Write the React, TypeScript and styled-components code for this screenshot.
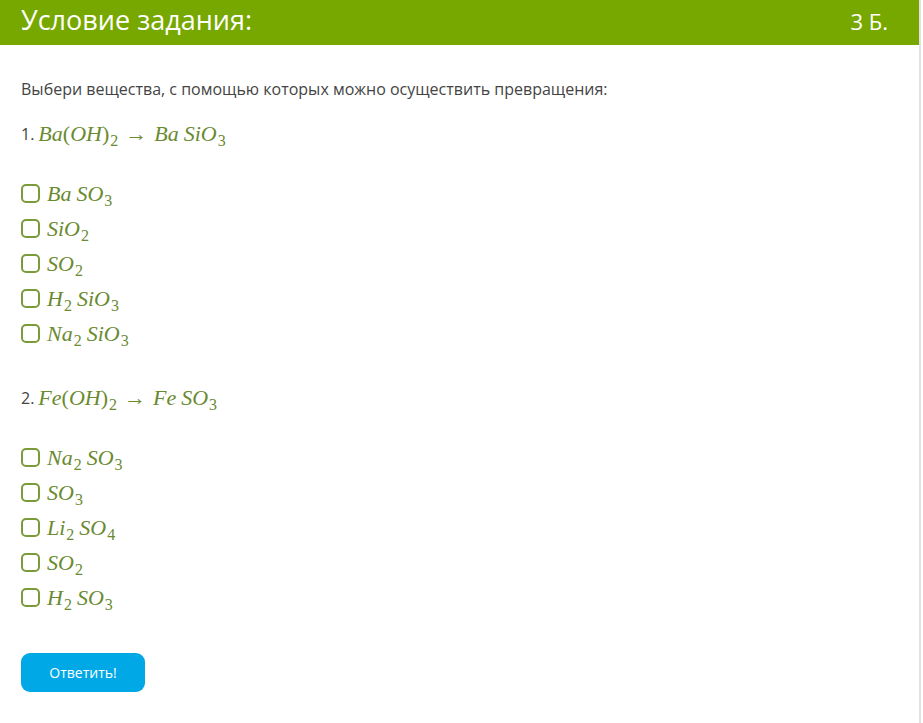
import styled, { createGlobalStyle } from "styled-components"
import { Fragment, useState } from "react"

const GlobalStyle = createGlobalStyle`
    html, body {
        margin: 0;
        padding: 0;
        background: #fff;
    }
    body {
        font-family: "Open Sans", "Noto Sans", sans-serif;
    }
`

const mathGreen = "#6a8a2f"
const boxGreen = "#7b9b3b"

const Panel = styled.div`
    width: 919px;
    min-height: 723px;
    border-right: 2px solid #e2e2e2;
    background: #fff;
`

const Header = styled.div`
    height: 45px;
    background: #76a800;
    display: flex;
    align-items: center;
    justify-content: space-between;
    padding: 0 31px 0 21px;
    color: #fff;
`

const Title = styled.span`
    font-size: 27px;
    line-height: 1;
    margin-top: -6px;
`

const Points = styled.span`
    font-size: 22px;
    line-height: 1;
    margin-top: -4px;
`

const Body = styled.div`
    padding: 34px 21px 0 21px;
`

const Prompt = styled.p`
    margin: 0 0 20px;
    font-size: 16px;
    line-height: 20px;
    color: #444;
`

const Question = styled.div<{ $top: number }>`
    margin-top: ${p => p.$top}px;
    display: flex;
    align-items: center;
    height: 30px;
    font-size: 16px;
    color: #444;
`

const Num = styled.span`
    margin-right: 4px;
`

const Options = styled.div`
    margin-top: 27px;
    display: flex;
    flex-direction: column;
`

const Option = styled.label`
    display: flex;
    align-items: center;
    height: 35px;
    cursor: pointer;
`

const Box = styled.span<{ $checked: boolean }>`
    width: 15px;
    height: 15px;
    border: 2px solid ${boxGreen};
    border-radius: 5px;
    margin-right: 7px;
    flex-shrink: 0;
    background: ${p => (p.$checked ? boxGreen : "transparent")};
`

const Math = styled.span`
    font-family: "Liberation Serif", "DejaVu Serif", serif;
    font-size: 22px;
    color: ${mathGreen};
    white-space: nowrap;
    line-height: 1;
`

const It = styled.i`
    font-style: italic;
`

const Up = styled.span`
    font-style: normal;
`

const Sub = styled.span`
    font-style: normal;
    font-size: 16px;
    position: relative;
    top: 5px;
    margin-left: 1px;
`

const Thin = styled.span`
    display: inline-block;
    width: 5px;
`

const Arrow = styled.span`
    font-style: normal;
    margin: 0 7px;
`

const SubmitBtn = styled.button`
    margin-top: 38px;
    width: 124px;
    height: 39px;
    border: none;
    border-radius: 9px;
    background: #00a8e6;
    color: #fff;
    font-family: "Open Sans", "Noto Sans", sans-serif;
    font-size: 14px;
    cursor: pointer;
`

// formula part: [text, subscript?]
type Part = [string, string?]

const Formula = ({ parts }: { parts: Part[] }) => (
    <Math>
        {parts.map(([txt, sub], i) => (
            <Fragment key={i}>
                {i > 0 && <Thin />}
                <It>{txt}</It>
                {sub && <Sub>{sub}</Sub>}
            </Fragment>
        ))}
    </Math>
)

const tasks: { num: string; from: string; to: Part[]; options: Part[][] }[] = [
    {
        num: "1.",
        from: "Ba",
        to: [["Ba"], ["SiO", "3"]],
        options: [
            [["Ba"], ["SO", "3"]],
            [["SiO", "2"]],
            [["SO", "2"]],
            [["H", "2"], ["SiO", "3"]],
            [["Na", "2"], ["SiO", "3"]],
        ],
    },
    {
        num: "2.",
        from: "Fe",
        to: [["Fe"], ["SO", "3"]],
        options: [
            [["Na", "2"], ["SO", "3"]],
            [["SO", "3"]],
            [["Li", "2"], ["SO", "4"]],
            [["SO", "2"]],
            [["H", "2"], ["SO", "3"]],
        ],
    },
]

export default function App() {
    const [checked, setChecked] = useState<Record<string, boolean>>({})

    const toggle = (key: string) => {
        setChecked(prev => ({ ...prev, [key]: !prev[key] }))
    }

    return (
        <Panel>
            <GlobalStyle />
            <Header>
                <Title>Условие задания:</Title>
                <Points>3 Б.</Points>
            </Header>
            <Body>
                <Prompt>Выбери вещества, с помощью которых можно осуществить превращения:</Prompt>
                {tasks.map((t, ti) => (
                    <div key={t.num}>
                        <Question $top={ti === 0 ? 0 : 32}>
                            <Num>{t.num}</Num>
                            <Math>
                                <It>{t.from}</It>
                                <Up>(</Up>
                                <It>OH</It>
                                <Up>)</Up>
                                <Sub>2</Sub>
                                <Arrow>→</Arrow>
                            </Math>
                            <Formula parts={t.to} />
                        </Question>
                        <Options>
                            {t.options.map((o, oi) => {
                                const key = `${ti}-${oi}`
                                return (
                                    <Option key={key} onClick={() => toggle(key)}>
                                        <Box $checked={!!checked[key]} />
                                        <Formula parts={o} />
                                    </Option>
                                )
                            })}
                        </Options>
                    </div>
                ))}
                <SubmitBtn>Ответить!</SubmitBtn>
            </Body>
        </Panel>
    )
}
